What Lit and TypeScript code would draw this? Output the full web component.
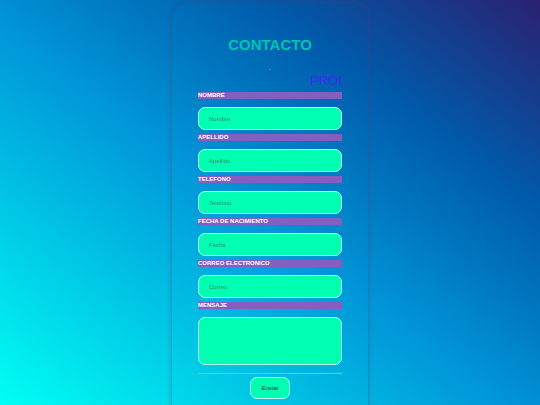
import { LitElement, html, css } from "lit";
import { customElement } from "lit/decorators.js";

const FIELDS = [
  { id: "nombre", label: "NOMBRE", hint: "Nombre" },
  { id: "apellido", label: "APELLIDO", hint: "Apellido" },
  { id: "telefono", label: "TELEFONO", hint: "Telefono" },
  { id: "fecha", label: "FECHA DE NACIMIENTO", hint: "Fecha" },
  { id: "correo", label: "CORREO ELECTRONICO", hint: "Correo" },
];

@customElement("app-root")
export class AppRoot extends LitElement {
  static styles = css`
    :host {
      display: block;
      height: 100vh;
      overflow-y: auto;
      scrollbar-width: none;
      box-sizing: border-box;
      padding: 3px 0 0;
      font-family: "Liberation Sans", Arial, sans-serif;
      font-size: 6px;
      color: #fff;
      background: linear-gradient(
        to top right,
        #00fff4 0%,
        #0098d9 46%,
        #005bab 74%,
        #2a2170 100%
      );
    }
    .card {
      box-sizing: border-box;
      width: 36%;
      min-width: 196px;
      margin: 0 auto;
      padding: 33px 26px 24px;
      border-radius: 16px;
      box-shadow: 0 0 5px rgba(100, 60, 115, 0.5);
    }
    .title {
      margin: 0;
      font-size: 15px;
      line-height: 17px;
      text-align: center;
      color: #00c4b0;
    }
    .dash {
      margin: 12px 0 0;
      line-height: 8px;
      text-align: center;
      color: #b8d8f0;
    }
    .ticker {
      margin-bottom: 4px;
      padding-left: 112px;
      overflow: hidden;
      white-space: nowrap;
      font-size: 13px;
      line-height: 15px;
      color: #3f2bea;
    }
    .field {
      display: flex;
      flex-direction: column;
      gap: 8px;
      margin-bottom: 4px;
    }
    .label {
      background: #855fc0;
      font-weight: bold;
      line-height: 7px;
    }
    .input {
      box-sizing: border-box;
      width: 100%;
      height: 23px;
      margin: 0;
      padding: 0 10px;
      border: 1px solid #b4fff2;
      border-radius: 7px;
      background: #00ffb0;
      font: inherit;
      color: #134;
      outline: none;
    }
    .input::placeholder {
      color: #3c8c78;
    }
    .area {
      height: 48px;
      padding: 6px 10px;
      resize: none;
    }
    .rule {
      height: 1px;
      margin: 8px 0 3px;
      border: 0;
      background: #7cbcdc;
    }
    .actions {
      display: flex;
      justify-content: center;
    }
    .send {
      height: 22px;
      padding: 0 10px;
      border: 1px solid #b4fff2;
      border-radius: 7px;
      background: #00ffb0;
      font: inherit;
      color: #0a4034;
    }
  `;

  render() {
    return html`
      <form class="card">
        <h1 class="title">CONTACTO</h1>
        <p class="dash">-</p>
        <div class="ticker">PROC</div>
        ${FIELDS.map(
          (f) => html`<div class="field">
            <label class="label" for=${f.id}>${f.label}</label>
            <input class="input" id=${f.id} type="text" placeholder=${f.hint} />
          </div>`
        )}
        <div class="field">
          <label class="label" for="mensaje">MENSAJE</label>
          <textarea class="input area" id="mensaje"></textarea>
        </div>
        <hr class="rule" />
        <div class="actions"><button class="send" type="button">Enviar</button></div>
      </form>
    `;
  }
}
